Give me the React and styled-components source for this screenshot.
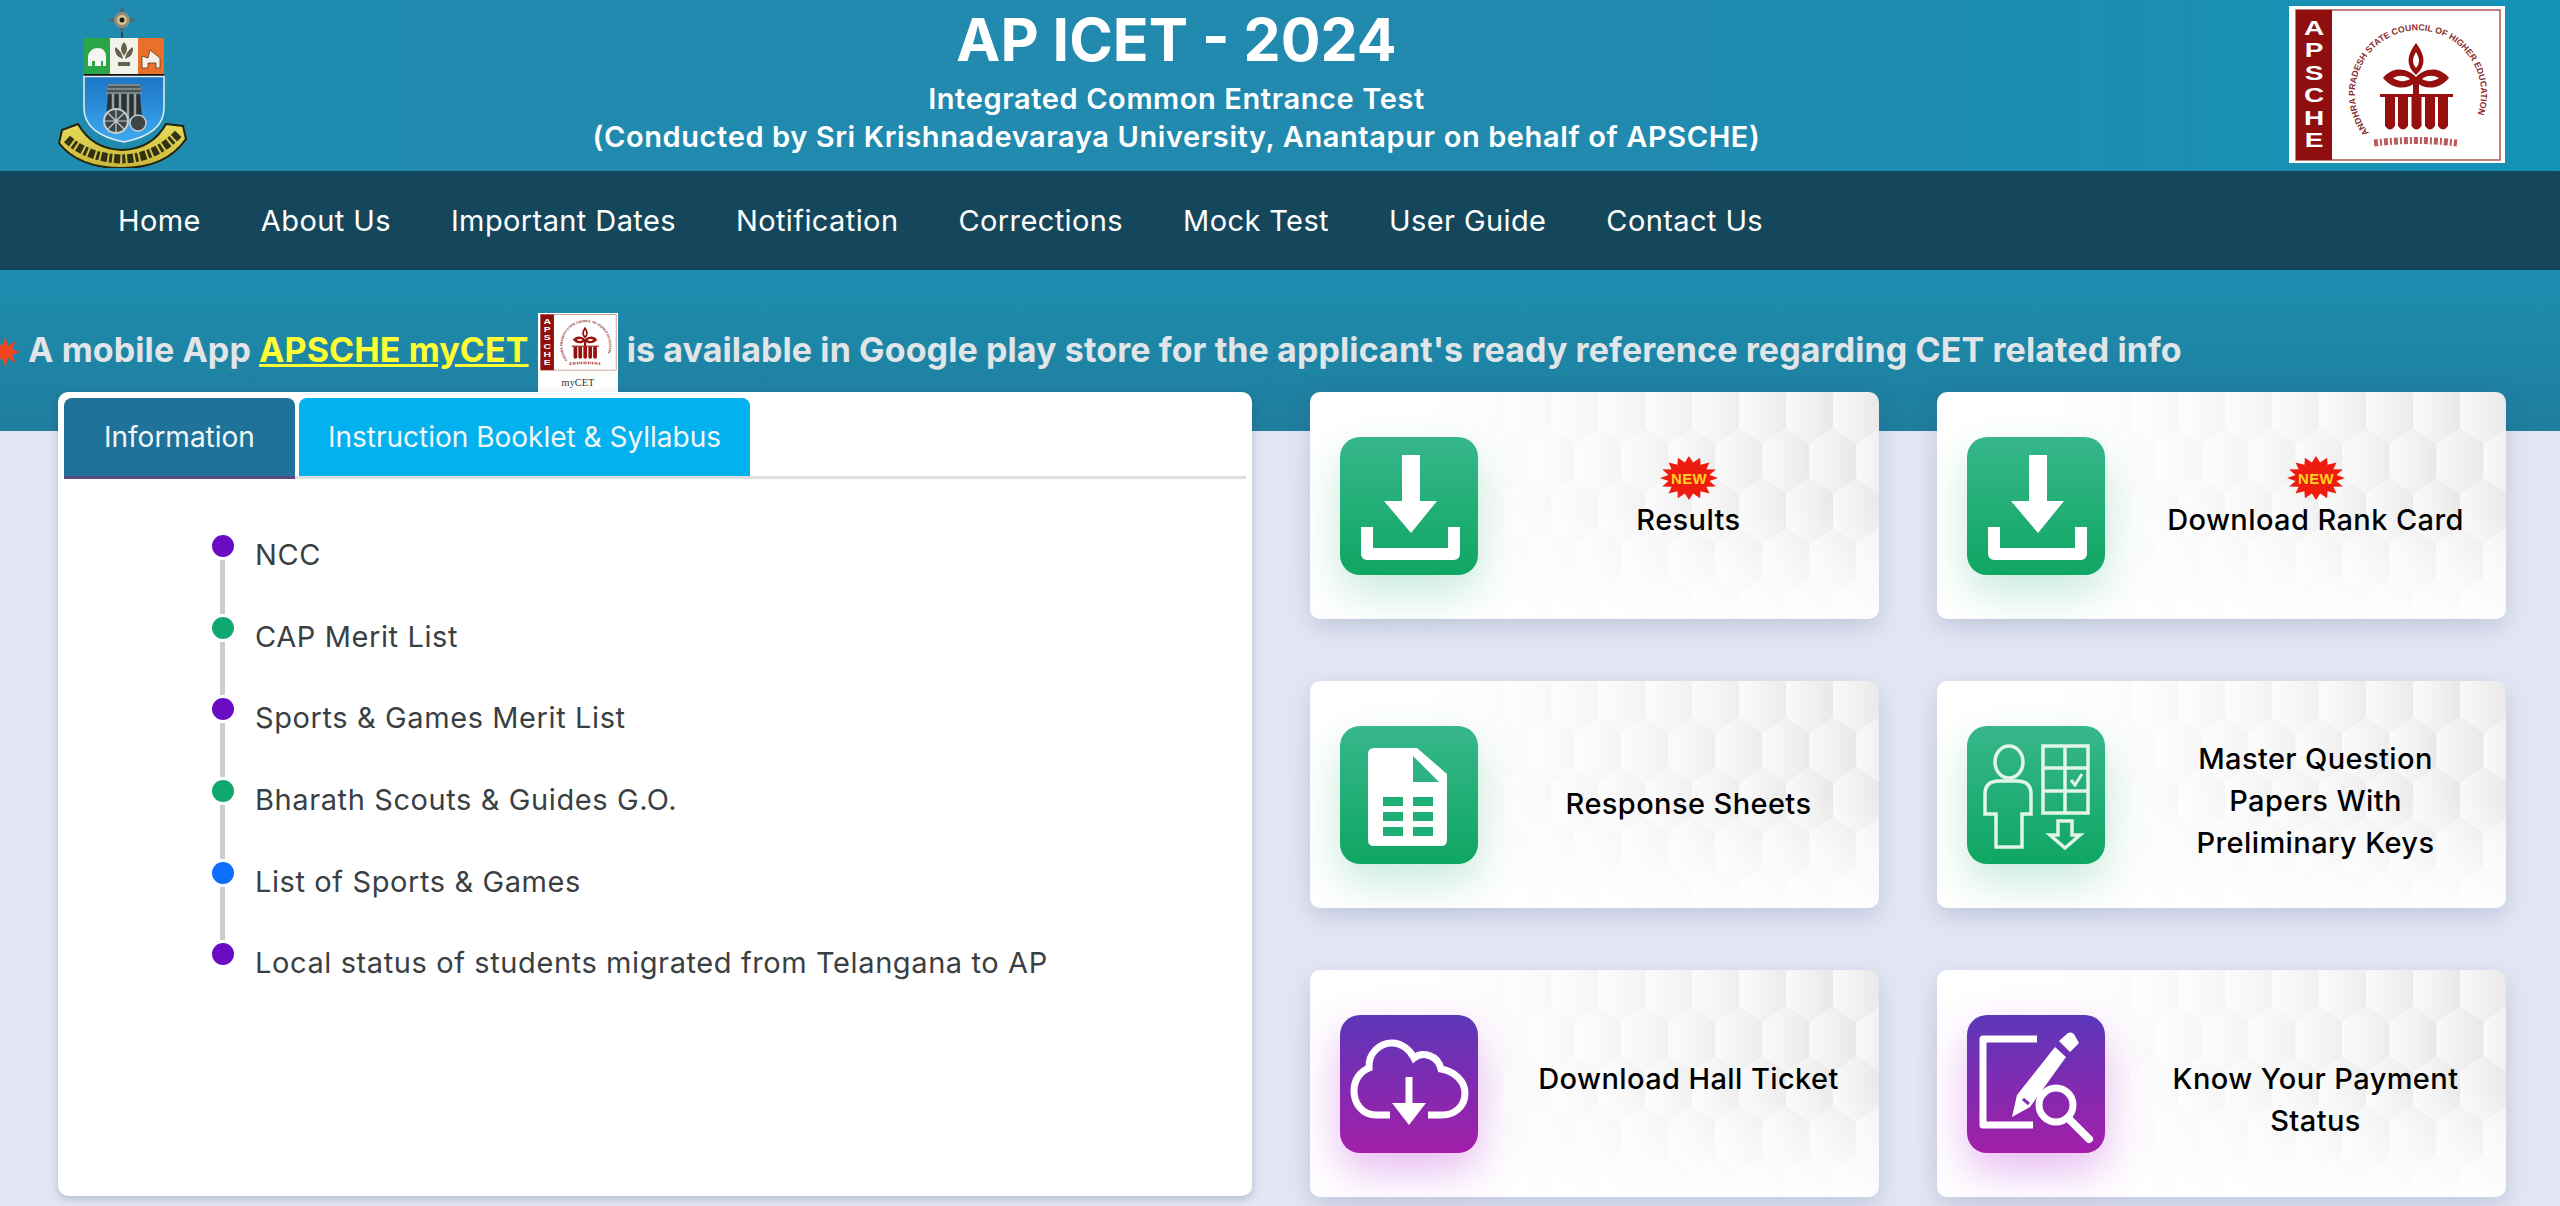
import React from 'react';
import styled, { createGlobalStyle } from 'styled-components';

const GlobalStyle = createGlobalStyle`
	html, body {
		margin: 0;
		padding: 0;
		overflow: hidden;
		background: #e3e7f4;
	}
	* {
		box-sizing: border-box;
	}
`;

const hexTile = encodeURIComponent(
	`<svg xmlns="http://www.w3.org/2000/svg" width="47" height="100" viewBox="0 0 47 100">
	<defs><linearGradient id="g" x1="0" x2="1" y1="0" y2="0"><stop offset="0" stop-color="#f9f9f9"/><stop offset="1" stop-color="#e8e8e8"/></linearGradient></defs>
	<polygon fill="url(#g)" points="23.5,-16 47,0 47,34 23.5,50 0,34 0,0"/>
	<polygon fill="url(#g)" points="0,34 23.5,50 23.5,84 0,100 -23.5,84 -23.5,50"/>
	<polygon fill="url(#g)" points="47,34 70.5,50 70.5,84 47,100 23.5,84 23.5,50"/>
	<polygon fill="url(#g)" points="23.5,84 47,100 47,134 23.5,150 0,134 0,100"/>
	</svg>`
);

const Page = styled.div`
	height: 100vh;
	overflow: hidden;
	background: #e3e7f4;
	font-family: Inter, 'Liberation Sans', sans-serif;
`;

const Hero = styled.header`
	height: 431px;
	background: linear-gradient(180deg, #1e8cae 0%, #1d8fb1 60%, #1f7d9d 100%);
`;

const Masthead = styled.div`
	height: 171px;
	display: flex;
	align-items: flex-start;
	padding: 6px 55px 0 58px;
	background: linear-gradient(90deg, #1f8caf 0%, #2289ae 60%, #1592b6 100%);
`;

const TitleBlock = styled.div`
	flex: 1;
	padding-right: 124px;
	color: #fff;
	text-align: center;
`;

const Title = styled.h1`
	margin: 2px 0 8px;
	font-size: 59px;
	line-height: 64px;
	font-weight: 700;
`;

const Subtitle = styled.div`
	font-size: 29px;
	line-height: 38px;
	font-weight: 600;
	letter-spacing: 0.6px;
`;

const Nav = styled.nav`
	height: 99px;
	display: flex;
	align-items: center;
	padding-left: 88px;
	background: #15475c;
`;

const NavLink = styled.a`
	padding: 0 30px;
	color: #fff;
	font-size: 29px;
	font-weight: 400;
	letter-spacing: 0.4px;
	white-space: nowrap;
`;

const Ticker = styled.div`
	height: 122px;
	display: flex;
	align-items: flex-end;
	gap: 9px;
	margin-left: -10px;
	white-space: nowrap;
`;

const TickerText = styled.span`
	padding-bottom: 22px;
	color: #e2e5e8;
	font-size: 34px;
	line-height: 40px;
	font-weight: 700;
	letter-spacing: 0.1px;

	a {
		color: #ffff33;
		text-decoration: underline;
	}
`;

const TickerLogo = styled.div`
	width: 80px;
	height: 79px;
	flex: none;
	background: #fff;
`;

const Main = styled.main`
	display: grid;
	grid-template-columns: 1194px 1fr;
	gap: 58px;
	margin-top: -39px;
	padding: 0 54px 0 58px;
`;

const Panel = styled.section`
	height: 804px;
	padding: 6px 6px 5px;
	background: #fff;
	border-radius: 10px;
	box-shadow: 0 3px 8px rgba(40, 50, 90, 0.25);
`;

const Tabs = styled.div`
	display: flex;
	gap: 4px;
	border-bottom: 3px solid #dedede;
`;

const Tab = styled.button`
	height: ${(p) => (p.$active ? '81px' : '78px')};
	margin-bottom: ${(p) => (p.$active ? '-3px' : '0')};
	padding: 0 ${(p) => (p.$active ? '40px' : '29px')};
	border: 0;
	border-bottom: ${(p) => (p.$active ? '3px solid #5b4a86' : '0')};
	border-radius: 8px 8px 0 0;
	background: ${(p) => (p.$active ? '#1f7299' : '#03b1ef')};
	color: #f2f7fa;
	font-family: inherit;
	font-size: 28px;
	font-weight: 400;
	white-space: nowrap;
`;

const Steps = styled.ul`
	margin: 0;
	padding: 56px 0 0 147px;
	list-style: none;
`;

const Step = styled.li`
	height: 81.7px;
	display: flex;
	gap: 21px;
`;

const Track = styled.div`
	width: 23px;
	display: flex;
	flex-direction: column;
	align-items: center;
`;

const Dot = styled.span`
	width: 22px;
	height: 22px;
	flex: none;
	border-radius: 50%;
	background: ${(p) => p.$color};
`;

const Rail = styled.span`
	width: 5px;
	flex: 1;
	margin: 3px 0;
	background: #cdcdcd;
`;

const StepText = styled.a`
	padding-top: 2px;
	color: #3a3f44;
	font-size: 29px;
	line-height: 36px;
	letter-spacing: 0.6px;
`;

const CardGrid = styled.div`
	display: grid;
	grid-template-columns: 1fr 1fr;
	gap: 62px 58px;
`;

const Card = styled.a`
	height: 227px;
	display: flex;
	align-items: flex-start;
	gap: 20px;
	padding: 45px 0 0 30px;
	border-radius: 10px;
	background:
		linear-gradient(90deg, #fff 20%, rgba(255, 255, 255, 0) 92%),
		linear-gradient(0deg, rgba(255, 255, 255, 0.95) 0%, rgba(255, 255, 255, 0) 50%),
		url("data:image/svg+xml,${hexTile}") 6px 2px,
		#f6f6f6;
	box-shadow: 0 8px 24px rgba(60, 70, 130, 0.2);
`;

const IconTile = styled.div`
	width: 138px;
	height: 138px;
	flex: none;
	border-radius: 20px;
	background: ${(p) =>
		p.$tone === 'purple'
			? 'linear-gradient(180deg, #5c37b9 0%, #a31fa9 100%)'
			: 'linear-gradient(180deg, #37b78b 0%, #0fa663 100%)'};
	box-shadow: 0 18px 44px
		${(p) => (p.$tone === 'purple' ? 'rgba(190, 60, 220, 0.36)' : 'rgba(30, 170, 110, 0.25)')};

	svg {
		display: block;
	}
`;

const CardLabel = styled.div`
	flex: 1;
	margin-top: ${(p) => p.$top - 45}px;
	padding: 0 28px;
	color: #000;
	font-size: 29px;
	line-height: 42px;
	font-weight: 500;
	letter-spacing: 0.4px;
	text-align: center;
`;

const NewBadge = styled.svg`
	display: block;
	margin: 0 auto -1px;
`;

const TickerStar = styled.svg`
	margin-right: 8px;
	vertical-align: -5px;
`;

const IconFrame = ({ children }) => (
	<svg width="138" height="138" viewBox="0 0 138 138">
		{children}
	</svg>
);

const DownloadIcon = () => (
	<IconFrame>
		<polygon fill="#fff" points="62,18 80,18 80,64 97,64 71,96 44,64 62,64" />
		<path d="M27 90V117H114V90" fill="none" stroke="#fff" strokeWidth="12" strokeLinejoin="round" />
	</IconFrame>
);

const SheetIcon = () => (
	<IconFrame>
		<path fill="#fff" d="M34 22H77L107 48V114Q107 120 101 120H34Q28 120 28 114V28Q28 22 34 22Z" />
		<polygon fill="#2fb283" points="73,30 73,56 99,56" />
		<g fill="#1fae74">
			<rect x="43" y="71" width="20" height="9" />
			<rect x="73" y="71" width="20" height="9" />
			<rect x="43" y="86" width="20" height="9" />
			<rect x="73" y="86" width="20" height="9" />
			<rect x="43" y="101" width="20" height="9" />
			<rect x="73" y="101" width="20" height="9" />
		</g>
	</IconFrame>
);

const MasterIcon = () => (
	<IconFrame>
		<g fill="none" stroke="#e2f5e9" strokeWidth="3.5">
			<ellipse cx="42" cy="36" rx="14" ry="16" />
			<path d="M29 121V88H18V68Q18 55 32 55H50Q64 55 64 68V88H55V121Z" />
			<rect x="76" y="20" width="45" height="67" />
			<path d="M98 20V87M76 42H121M76 65H121" />
			<path d="M91 95H105V109H113L98 122L83 109H91Z" />
			<path d="M104 54L108 59L115 48" strokeWidth="3" />
		</g>
	</IconFrame>
);

const CloudIcon = () => (
	<IconFrame>
		<path
			d="M50 100H36C22 100 14 88 14 76C14 64 21 56 29 53C28 38 40 28 52 28C62 28 70 35 74 43C82 36 98 40 101 54C114 56 125 66 125 78C125 92 114 100 102 100H88"
			fill="none"
			stroke="#fff"
			strokeWidth="7"
		/>
		<path d="M69 62V92" stroke="#fff" strokeWidth="7" />
		<polygon fill="#fff" points="52,88 86,88 69,110" />
	</IconFrame>
);

const PaymentIcon = () => (
	<IconFrame>
		<path d="M70 24H16V110H66" fill="none" stroke="#fff" strokeWidth="7" strokeLinejoin="round" />
		<path fill="#fff" d="M92 26L101 18Q106 16 108 21L112 28L103 37ZM88 32L99 42L63 92L45 102L50 80Z" />
		<path d="M56 84L62 89" stroke="#7b2fb5" strokeWidth="3" />
		<circle cx="89" cy="90" r="17" fill="none" stroke="#fff" strokeWidth="7" />
		<path d="M101 103L122 124" stroke="#fff" strokeWidth="8" strokeLinecap="round" />
	</IconFrame>
);

// spiky "NEW" sticker, point list is worked out from the spike count
const burstPoints = (() => {
	const pts = [];
	for (let i = 0; i < 32; i++) {
		const a = (i / 32) * Math.PI * 2;
		const r = i % 2 ? 0.72 : 1;
		pts.push(`${(29 + Math.cos(a) * 29 * r).toFixed(1)},${(22 + Math.sin(a) * 22 * r).toFixed(1)}`);
	}
	return pts.join(' ');
})();

const Burst = () => (
	<NewBadge width="58" height="44" viewBox="0 0 58 44">
		<polygon fill="#ee1c0e" points={burstPoints} />
		<text
			x="29"
			y="28"
			textAnchor="middle"
			fill="#ffd21f"
			fontFamily="'Liberation Sans', sans-serif"
			fontSize="15"
			fontWeight="700"
			textLength="36"
			lengthAdjust="spacingAndGlyphs"
		>
			NEW
		</text>
	</NewBadge>
);

const UniversityLogo = () => (
	<svg width="130" height="162" viewBox="0 0 130 162">
		<defs>
			<linearGradient id="skuShield" x1="0" x2="0" y1="0" y2="1">
				<stop offset="0" stopColor="#1c74c6" />
				<stop offset="1" stopColor="#3daaf0" />
			</linearGradient>
			<linearGradient id="skuRibbon" x1="0" x2="0" y1="0" y2="1">
				<stop offset="0" stopColor="#e8dc5a" />
				<stop offset="1" stopColor="#c9b63a" />
			</linearGradient>
		</defs>
		{/* finial on top */}
		<g transform="translate(64 14)">
			<path d="M0-14L4-4L14 0L4 4L0 14L-4 4L-14 0L-4-4Z" fill="#56666e" />
			<circle r="8" fill="#8a8f86" />
			<circle r="5" fill="#d9c48a" />
			<circle r="2.5" fill="#1c1c1c" />
		</g>
		<path d="M64 26V33" stroke="#34464f" strokeWidth="2" />
		{/* top band */}
		<rect x="26" y="32" width="26" height="36" fill="#2aa548" />
		<rect x="52" y="32" width="28" height="36" fill="#f2f2ea" />
		<rect x="80" y="32" width="26" height="36" fill="#e8702a" />
		<path d="M30 60V50Q32 42 40 42Q47 42 48 50V60H45V55H43V60H37V55H34V60Z" fill="#f5f5f5" />
		<path d="M66 36Q60 42 66 50Q72 42 66 36ZM57 41Q56 50 65 53Q64 45 57 41ZM75 41Q76 50 67 53Q68 45 75 41ZM60 56H72V60H60Z" fill="#62624a" />
		<path d="M84 62V50L90 52L92 44L102 52V62H98V57H90V62Z" fill="#f7efe5" stroke="#5b3a1c" strokeWidth="0.8" />
		<rect x="26" y="68" width="80" height="2.5" fill="#111" />
		{/* shield with the chariot */}
		<path d="M26 70.5H106V102Q106 128 66 136Q26 128 26 102Z" fill="url(#skuShield)" stroke="#e6eef2" strokeWidth="1.5" />
		<path d="M48 88L50 78H82L84 88Z" fill="#7c8688" />
		<path d="M50 81H82M49 85H83" stroke="#39464a" strokeWidth="1.5" />
		<path d="M50 88H82L84 112H48Z" fill="#2a3234" />
		<path d="M55 88V112M62 88V112M70 88V112M77 88V112" stroke="#98a2a2" strokeWidth="2.5" />
		<circle cx="58" cy="115" r="12" fill="#3c4648" stroke="#c8cccc" strokeWidth="2" />
		<path d="M58 103V127M46 115H70M50 107L66 123M66 107L50 123" stroke="#c8cccc" strokeWidth="1.2" />
		<circle cx="80" cy="117" r="8" fill="#3c4648" stroke="#c8cccc" strokeWidth="1.5" />
		{/* motto ribbon */}
		<path
			d="M4 124L20 118Q34 143 64 144Q94 143 108 118L125 120L128 133Q108 162 64 162Q20 162 1 137Z"
			fill="url(#skuRibbon)"
			stroke="#23230f"
			strokeWidth="2"
		/>
		<path d="M9 133Q30 152 64 153Q98 152 121 127" fill="none" stroke="#16160a" strokeWidth="9" strokeDasharray="6 2 3 2" opacity="0.85" />
	</svg>
);

const ApscheMark = ({ id }) => (
	<g>
		<rect x="7" y="4" width="204" height="150" fill="#fff" stroke="#a8584f" strokeWidth="1.5" />
		<rect x="7" y="4" width="36" height="150" fill="#8f0e0e" />
		<g transform="scale(1.4 1)">
			<text fill="#fff" fontFamily="'Liberation Sans', sans-serif" fontWeight="700" fontSize="20" textAnchor="middle">
				{['A', 'P', 'S', 'C', 'H', 'E'].map((ch, i) => (
					<tspan key={ch} x="17.9" y={29 + i * 22.4}>
						{ch}
					</tspan>
				))}
			</text>
		</g>
		<path id={id} d="M80 127A63 63 0 1 1 178 127" fill="none" />
		<text fill="#8a2b2b" fontFamily="'Liberation Sans', sans-serif" fontWeight="700" fontSize="8.8">
			<textPath href={`#${id}`}>ANDHRA PRADESH STATE COUNCIL OF HIGHER EDUCATION</textPath>
		</text>
		<g fill="#970f0f">
			<path d="M127 37C117 50 117 60 127 69C137 60 137 50 127 37ZM127 46C123 53 123 57 127 62C131 57 131 53 127 46Z" fillRule="evenodd" />
			<path d="M94 72C104 60 118 62 127 71C136 62 150 60 160 72C150 84 136 84 127 76C118 84 104 84 94 72ZM104 72C110 76 116 76 121 73C116 69 110 69 104 72ZM133 73C138 76 144 76 150 72C144 69 138 69 133 73Z" fillRule="evenodd" />
			<rect x="124" y="74" width="6" height="16" />
			<rect x="91" y="88" width="73" height="3" />
			<path d="M96 91h10v29q-5 7-10 0zM109 91h10v29q-5 7-10 0zM122.500 91h10v29q-5 7-10 0zM136 91h10v29q-5 7-10 0zM149 91h10v29q-5 7-10 0z" />
		</g>
		<path d="M85 137Q127 132 168 137" fill="none" stroke="#a33" strokeWidth="7" strokeDasharray="4 2 2 2" opacity="0.8" />
	</g>
);

const timeline = [
	{ label: 'NCC', color: '#6a0dc2' },
	{ label: 'CAP Merit List', color: '#10a86f' },
	{ label: 'Sports & Games Merit List', color: '#6a0dc2' },
	{ label: 'Bharath Scouts & Guides G.O.', color: '#10a86f' },
	{ label: 'List of Sports & Games', color: '#0d6efd' },
	{ label: 'Local status of students migrated from Telangana to AP', color: '#6a0dc2' },
];

const cards = [
	{ label: 'Results', top: 64, isNew: true, Icon: DownloadIcon },
	{ label: 'Download Rank Card', top: 64, isNew: true, Icon: DownloadIcon },
	{ label: 'Response Sheets', top: 102, Icon: SheetIcon },
	{ label: 'Master Question Papers With Preliminary Keys', top: 57, Icon: MasterIcon },
	{ label: 'Download Hall Ticket', top: 88, tone: 'purple', Icon: CloudIcon },
	{ label: 'Know Your Payment Status', top: 88, tone: 'purple', Icon: PaymentIcon },
];

const navItems = [
	'Home',
	'About Us',
	'Important Dates',
	'Notification',
	'Corrections',
	'Mock Test',
	'User Guide',
	'Contact Us',
];

const App = () => (
	<Page>
		<GlobalStyle />
		<Hero>
			<Masthead>
				<UniversityLogo />
				<TitleBlock>
					<Title>AP ICET - 2024</Title>
					<Subtitle>Integrated Common Entrance Test</Subtitle>
					<Subtitle>(Conducted by Sri Krishnadevaraya University, Anantapur on behalf of APSCHE)</Subtitle>
				</TitleBlock>
				<svg width="216" height="157" viewBox="0 0 216 157">
					<rect width="216" height="157" fill="#fff" />
					<ApscheMark id="apscheRing" />
				</svg>
			</Masthead>
			<Nav>
				{navItems.map((item) => (
					<NavLink key={item}>{item}</NavLink>
				))}
			</Nav>
			<Ticker>
				<TickerText>
					<TickerStar width="30" height="30" viewBox="0 0 30 30">
						<polygon
							fill="#f0451c"
							points="15,0 18,9 26,4 22,12 30,15 22,18 26,26 18,21 15,30 12,21 4,26 8,18 0,15 8,12 4,4 12,9"
						/>
					</TickerStar>
					A mobile App <a>APSCHE myCET</a>
				</TickerText>
				<TickerLogo>
					<svg width="80" height="79" viewBox="0 0 216 213">
						<ApscheMark id="apscheRingSmall" />
						<text x="108" y="196" textAnchor="middle" fontFamily="'Liberation Serif', serif" fontSize="28" fill="#333">
							myCET
						</text>
					</svg>
				</TickerLogo>
				<TickerText>is available in Google play store for the applicant's ready reference regarding CET related info</TickerText>
			</Ticker>
		</Hero>
		<Main>
			<Panel>
				<Tabs>
					<Tab $active>Information</Tab>
					<Tab>Instruction Booklet &amp; Syllabus</Tab>
				</Tabs>
				<Steps>
					{timeline.map((item, i) => (
						<Step key={item.label}>
							<Track>
								<Dot $color={item.color} />
								{i < timeline.length - 1 && <Rail />}
							</Track>
							<StepText>{item.label}</StepText>
						</Step>
					))}
				</Steps>
			</Panel>
			<CardGrid>
				{cards.map(({ label, top, isNew, tone, Icon }) => (
					<Card key={label}>
						<IconTile $tone={tone}>
							<Icon />
						</IconTile>
						<CardLabel $top={top}>
							{isNew && <Burst />}
							{label}
						</CardLabel>
					</Card>
				))}
			</CardGrid>
		</Main>
	</Page>
);

export default App;
